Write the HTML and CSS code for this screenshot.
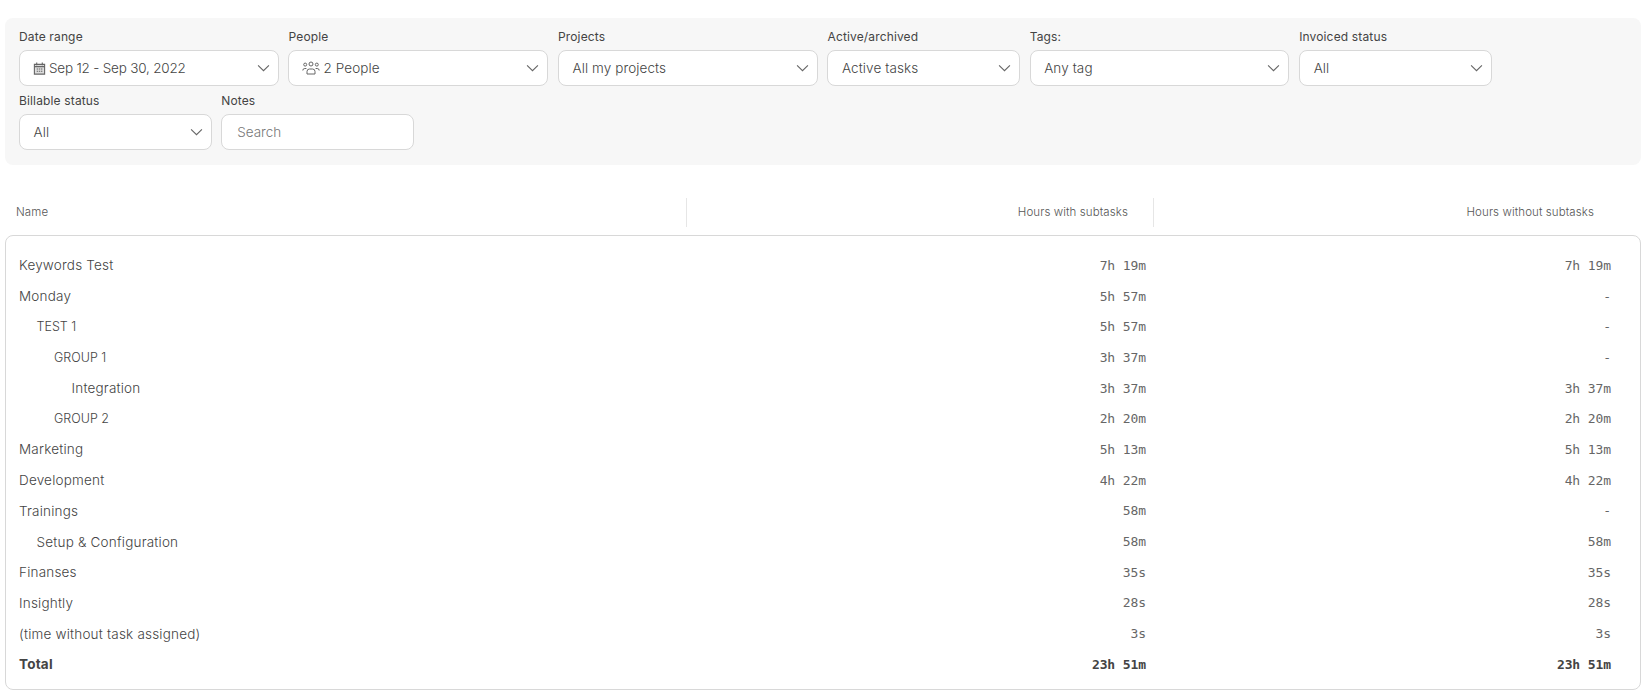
FILE: index.html
```html
<!DOCTYPE html>
<html lang="en">
  <head>
    <meta charset="UTF-8" />
    <title>Time report</title>
    <link rel="stylesheet" href="styles.css">
  </head>
  <body>
    <div class="page">
      <!-- Filters -->
      <div class="filters">
        <div class="field wide">
          <label>Date range</label>
          <div class="select">
            <svg class="icon" viewBox="0 0 14 15"><path d="M1.5 3h11v10.5h-11z M1.5 5.5h11 M4 1v3 M10 1v3" fill="#ddd" stroke="#666" stroke-width="1.2"/><path d="M4 8h1.5M6.3 8h1.5M8.6 8h1.5M4 10.5h1.5M6.3 10.5h1.5M8.6 10.5h1.5" stroke="#666" stroke-width="1.2"/></svg>
            <span class="value date">Sep 12 - Sep 30, 2022</span>
            <svg class="chevron" viewBox="0 0 12 7"><path d="M1 1l5 5 5-5"/></svg>
          </div>
        </div>
        <div class="field wide">
          <label>People</label>
          <div class="select">
            <svg class="icon people" viewBox="0 0 18 14" fill="none" stroke="#666" stroke-width="1"><circle cx="9" cy="3" r="2"/><circle cx="3.2" cy="3.6" r="1.5"/><circle cx="14.8" cy="3.6" r="1.5"/><path d="M5 13v-2.5a2.5 2.5 0 0 1 2.5-2.5h3a2.5 2.5 0 0 1 2.5 2.5V13z"/><path d="M.8 9.5a2 2 0 0 1 2-2h1.6M17.2 9.5a2 2 0 0 0-2-2h-1.6"/></svg>
            <span class="value">2 People</span>
            <svg class="chevron" viewBox="0 0 12 7"><path d="M1 1l5 5 5-5"/></svg>
          </div>
        </div>
        <div class="field wide">
          <label>Projects</label>
          <div class="select plain">
            <span class="value">All my projects</span>
            <svg class="chevron" viewBox="0 0 12 7"><path d="M1 1l5 5 5-5"/></svg>
          </div>
        </div>
        <div class="field">
          <label>Active/archived</label>
          <div class="select plain">
            <span class="value">Active tasks</span>
            <svg class="chevron" viewBox="0 0 12 7"><path d="M1 1l5 5 5-5"/></svg>
          </div>
        </div>
        <div class="field wide">
          <label>Tags:</label>
          <div class="select plain">
            <span class="value">Any tag</span>
            <svg class="chevron" viewBox="0 0 12 7"><path d="M1 1l5 5 5-5"/></svg>
          </div>
        </div>
        <div class="field">
          <label>Invoiced status</label>
          <div class="select plain">
            <span class="value">All</span>
            <svg class="chevron" viewBox="0 0 12 7"><path d="M1 1l5 5 5-5"/></svg>
          </div>
        </div>
        <div class="field">
          <label>Billable status</label>
          <div class="select plain">
            <span class="value">All</span>
            <svg class="chevron" viewBox="0 0 12 7"><path d="M1 1l5 5 5-5"/></svg>
          </div>
        </div>
        <div class="field">
          <label>Notes</label>
          <input class="search" type="text" placeholder="Search">
        </div>
      </div>

      <!-- Report table -->
      <div class="table-head">
        <div class="head-cell">Name</div>
        <div class="head-cell num">Hours with subtasks</div>
        <div class="head-cell num last">Hours without subtasks</div>
      </div>
      <div class="table-body">
        <div class="row"><div class="name">Keywords Test</div><div class="time">7h 19m</div><div class="time">7h 19m</div></div>
        <div class="row"><div class="name">Monday</div><div class="time">5h 57m</div><div class="time">-</div></div>
        <div class="row"><div class="name lvl1 caps">TEST 1</div><div class="time">5h 57m</div><div class="time">-</div></div>
        <div class="row"><div class="name lvl2 caps">GROUP 1</div><div class="time">3h 37m</div><div class="time">-</div></div>
        <div class="row"><div class="name lvl3">Integration</div><div class="time">3h 37m</div><div class="time">3h 37m</div></div>
        <div class="row"><div class="name lvl2 caps">GROUP 2</div><div class="time">2h 20m</div><div class="time">2h 20m</div></div>
        <div class="row"><div class="name">Marketing</div><div class="time">5h 13m</div><div class="time">5h 13m</div></div>
        <div class="row"><div class="name">Development</div><div class="time">4h 22m</div><div class="time">4h 22m</div></div>
        <div class="row"><div class="name">Trainings</div><div class="time">58m</div><div class="time">-</div></div>
        <div class="row"><div class="name lvl1">Setup &amp; Configuration</div><div class="time">58m</div><div class="time">58m</div></div>
        <div class="row"><div class="name">Finanses</div><div class="time">35s</div><div class="time">35s</div></div>
        <div class="row"><div class="name">Insightly</div><div class="time">28s</div><div class="time">28s</div></div>
        <div class="row"><div class="name">(time without task assigned)</div><div class="time">3s</div><div class="time">3s</div></div>
        <div class="row total"><div class="name">Total</div><div class="time">23h 51m</div><div class="time">23h 51m</div></div>
      </div>
    </div>
  </body>
</html>
```

FILE: styles.css
```css
* {
  box-sizing: border-box;
}

body {
  margin: 0;
  background: white;
  font-family: Inter, "Noto Sans", sans-serif;
  color: #444;
  font-size: 13px;
}

.page {
  padding: 18px 7px 0 5px;
}

.filters {
  display: flex;
  flex-wrap: wrap;
  gap: 6px 9.7px;
  height: 147px;
  padding: 10px 14px;
  background: #f7f7f7;
  border-radius: 8px;
  align-content: flex-start;
}

.field {
  width: 192.5px;
}

.field.wide {
  width: 259.8px;
}

label {
  display: block;
  height: 22px;
  line-height: 18px;
  font-size: 12px;
  letter-spacing: 0.15px;
  color: #444;
}

.select,
.search {
  width: 100%;
  height: 36px;
  background: white;
  border: 1px solid #d8d8d8;
  border-radius: 8px;
}

.select {
  display: flex;
  align-items: center;
  padding: 0 8px 0 13px;
}

.select.plain {
  padding-left: 13.5px;
}

.value {
  flex: 1;
  font-size: 13.5px;
  font-weight: 300;
  letter-spacing: 0.1px;
}

.value.date {
  letter-spacing: -0.2px;
}

.icon {
  width: 13px;
  height: 15px;
  margin-right: 3px;
}

.icon.people {
  width: 18px;
  height: 14px;
  margin-right: 3px;
}

.chevron {
  width: 13px;
  height: 8px;
  fill: none;
  stroke: #666;
  stroke-width: 1;
}

.search {
  padding: 0 15px;
  font-family: inherit;
  font-size: 13.5px;
  font-weight: 300;
  outline: none;
}

.search::placeholder {
  color: #777;
}

.table-head {
  display: grid;
  grid-template-columns: 682px 467px 1fr;
  margin-top: 33px;
  height: 29px;
}

.head-cell {
  display: flex;
  align-items: center;
  padding-left: 11px;
  padding-bottom: 1px;
  font-size: 11.5px;
  font-weight: 300;
  letter-spacing: 0.1px;
  color: #555;
  border-right: 1px solid #e6e6e6;
}

.head-cell.num {
  justify-content: flex-end;
  padding-right: 25px;
}

.head-cell.last {
  padding-right: 47px;
  border-right: 0;
}

.table-body {
  margin-top: 8px;
  height: 455px;
  padding-top: 14px;
  border: 1px solid #d8d8d8;
  border-radius: 8px;
}

.row {
  display: grid;
  grid-template-columns: 681px 466px 1fr;
  align-items: center;
  height: 30.7px;
}

.name {
  padding-left: 13px;
  font-size: 13.5px;
  font-weight: 300;
  letter-spacing: 0.2px;
}

.name.caps {
  font-size: 12.5px;
  letter-spacing: 0;
}

.name.lvl1 {
  padding-left: 30.5px;
}

.name.lvl2 {
  padding-left: 48px;
}

.name.lvl3 {
  padding-left: 65.5px;
}

.time {
  padding-right: 7px;
  text-align: right;
  font-family: "DejaVu Sans Mono", monospace;
  font-size: 13px;
  letter-spacing: -0.1px;
  color: #666;
}

.time:last-child {
  padding-right: 29px;
}

.total .name,
.total .time {
  font-weight: bold;
  color: #444;
}
```
